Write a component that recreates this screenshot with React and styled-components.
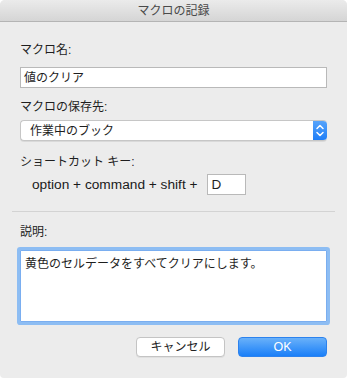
import React from 'react'
import styled, { createGlobalStyle } from 'styled-components'

const GlobalStyle = createGlobalStyle`
  html, body {
    margin: 0;
    padding: 0;
    background: #ffffff;
  }
  body {
    font-family: "Liberation Sans", "Noto Sans CJK JP", sans-serif;
    font-size: 12px;
    color: #1e1e1e;
  }
`

const Window = styled.div`
  width: 347px;
  height: 378px;
  background: #ececec;
  border-radius: 5px 5px 4px 4px;
  overflow: hidden;
  display: flex;
  flex-direction: column;
`

const TitleBar = styled.div`
  height: 21px;
  border-bottom: 1px solid #b4b4b4;
  background: linear-gradient(#ebebeb, #d5d5d5);
  display: flex;
  align-items: center;
  justify-content: center;
  color: #4a4a4a;
  line-height: 16px;
`

const Body = styled.div`
  display: flex;
  flex-direction: column;
  padding: 20px 20px 0 20px;
`

const Label = styled.div`
  height: 16px;
  line-height: 16px;
  margin-top: ${p => p.$mt || 0}px;
`

const TextField = styled.div`
  height: 19px;
  border: 1px solid #b9b9b9;
  background: #fff;
  display: flex;
  align-items: center;
  padding-left: 3px;
  margin-top: ${p => p.$mt || 0}px;
  line-height: 16px;
`

const Select = styled.div`
  height: 19px;
  margin-top: ${p => p.$mt || 0}px;
  display: flex;
  background: #fff;
  border: 1px solid #c6c6c6;
  border-right: none;
  border-radius: 4px;
  box-shadow: 0 1px 0 rgba(0, 0, 0, 0.08);
  overflow: hidden;
`

const SelectText = styled.div`
  flex: 1;
  display: flex;
  align-items: center;
  padding-left: 9px;
  line-height: 16px;
`

const Stepper = styled.div`
  width: 14px;
  margin-top: -1px;
  margin-bottom: -1px;
  background: linear-gradient(#5aa6fb, #1c7cf7);
  border-radius: 0 4px 4px 0;
  display: flex;
  align-items: center;
  justify-content: center;
`

const ShortcutRow = styled.div`
  display: flex;
  align-items: center;
  margin-top: 4px;
  padding-left: 12px;
  height: 21px;
`

const KeyText = styled.span`
  font-size: 13.7px;
  line-height: 16px;
  color: #1a1a1a;
`

const KeyBox = styled.div`
  width: 33px;
  height: 19px;
  margin-left: 9px;
  border: 1px solid #b9b9b9;
  background: #fff;
  display: flex;
  align-items: center;
  padding-left: 4px;
  font-size: 13.5px;
  line-height: 16px;
`

const Separator = styled.div`
  height: 1px;
  background: #d3d3d3;
  margin: 16px -8px 0 -8px;
`

const NoteArea = styled.div`
  margin-top: ${p => p.$mt || 0}px;
  height: 60px;
  border: 1px solid #7aaef0;
  background: #fff;
  box-shadow: 0 0 0 3px #8dbdf3;
  border-radius: 1px;
  padding: 5px 4px;
  line-height: 16px;
`

const ButtonRow = styled.div`
  display: flex;
  justify-content: flex-end;
  gap: 13px;
  margin-top: 15px;
`

const Button = styled.div`
  width: ${p => p.$w}px;
  height: 20px;
  box-sizing: border-box;
  border-radius: 4px;
  display: flex;
  align-items: center;
  justify-content: center;
  line-height: 16px;
  ${p => p.$primary
    ? `
    background: linear-gradient(#69b1fa, #1a7ff8);
    color: #fff;
    border: 1px solid #2c82ee;
    font-size: 12.5px;
    `
    : `
    background: #fff;
    color: #222;
    border: 1px solid #c4c4c4;
    box-shadow: 0 1px 0 rgba(0,0,0,0.05);
    `}
`

const Chevrons = () => (
  <svg width="10" height="15" viewBox="0 0 10 15">
    <path d="M2 5.5 L5 2.5 L8 5.5" fill="none" stroke="#fff" strokeWidth="1.5" strokeLinecap="round" strokeLinejoin="round" />
    <path d="M2 9.5 L5 12.5 L8 9.5" fill="none" stroke="#fff" strokeWidth="1.5" strokeLinecap="round" strokeLinejoin="round" />
  </svg>
)

const App = () => {
  return (
    <>
      <GlobalStyle />
      <Window>
        <TitleBar>マクロの記録</TitleBar>
        <Body>
          <Label>マクロ名:</Label>
          <TextField $mt={9}>値のクリア</TextField>
          <Label $mt={11}>マクロの保存先:</Label>
          <Select $mt={5}>
            <SelectText>作業中のブック</SelectText>
            <Stepper><Chevrons /></Stepper>
          </Select>
          <Label $mt={13}>ショートカット キー:</Label>
          <ShortcutRow>
            <KeyText>option + command + shift +</KeyText>
            <KeyBox>D</KeyBox>
          </ShortcutRow>
          <Separator />
          <Label $mt={12}>説明:</Label>
          <NoteArea $mt={10}>黄色のセルデータをすべてクリアにします。</NoteArea>
          <ButtonRow>
            <Button $w={89}>キャンセル</Button>
            <Button $w={89} $primary>OK</Button>
          </ButtonRow>
        </Body>
      </Window>
    </>
  )
}

export default App
